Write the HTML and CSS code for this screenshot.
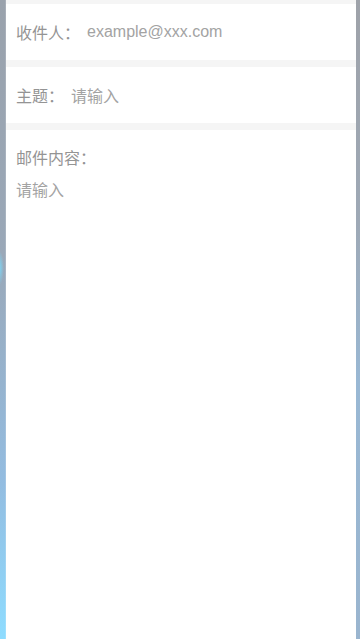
FILE: index.html
```html
<!DOCTYPE html>
<html lang="zh-CN">
<head>
<meta charset="utf-8">
<meta name="viewport" content="width=device-width, initial-scale=1">
<title>写邮件</title>
<link rel="stylesheet" href="styles.css">
</head>
<body>
<div class="frame">
  <div class="edge edge-left"><span class="glow"></span></div>
  <main class="panel">
    <div class="row">
      <span class="label">收件人：</span>
      <span class="value">example@xxx.com</span>
    </div>
    <div class="row">
      <span class="label">主题：</span>
      <span class="value">请输入</span>
    </div>
    <div class="content">
      <span class="label">邮件内容：</span>
      <span class="value">请输入</span>
    </div>
  </main>
  <div class="edge edge-right"></div>
</div>
</body>
</html>
```
FILE: styles.css
```css
html, body {
  margin: 0;
  padding: 0;
  height: 100%;
}
body {
  font-family: "Liberation Sans", "Noto Sans CJK SC", sans-serif;
  background: #9aa2ab;
}
.frame {
  display: flex;
  height: 639px;
  overflow: hidden;
}
.edge {
  flex: none;
  position: relative;
}
.edge-left {
  width: 6px;
  background: linear-gradient(180deg, #9aa2ac 0%, #9aa8b8 40%, #93bce0 75%, #8edcff 100%);
  box-shadow: inset -1px 0 0 rgba(255,255,255,0.15);
}
.glow {
  position: absolute;
  left: -6px;
  top: 250px;
  width: 10px;
  height: 36px;
  border-radius: 50%;
  background: radial-gradient(ellipse at center, rgba(120,220,255,0.9) 0%, rgba(120,220,255,0) 70%);
}
.edge-right {
  width: 4px;
  background: linear-gradient(180deg, #9ea2a9 0%, #9ea9b6 35%, #99b8d4 60%, #9ab5cf 100%);
}
.panel {
  flex: 1;
  background: #f5f5f5;
  padding-top: 4px;
  display: flex;
  flex-direction: column;
  gap: 7px;
}
.row {
  background: #ffffff;
  height: 56px;
  display: flex;
  align-items: center;
  padding-left: 10px;
  font-size: 16px;
}
.label {
  color: #949494;
}
.value {
  color: #a3a3a3;
}
.row .value {
  margin-left: 7px;
}
.content {
  flex: 1;
  background: #ffffff;
  padding: 18px 10px 0;
  display: flex;
  flex-direction: column;
  gap: 10px;
  font-size: 16px;
  line-height: 22px;
}
```
